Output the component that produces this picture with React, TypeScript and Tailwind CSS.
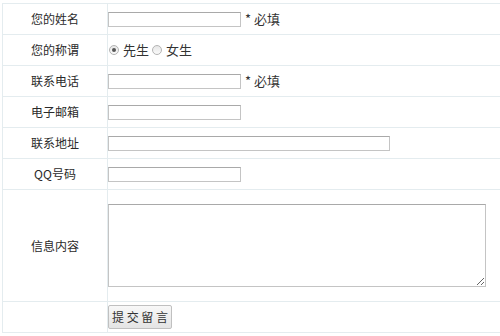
import type { ReactNode } from "react";

const line = "border-[#e4ecef]";
const font = { fontFamily: '"Noto Sans CJK SC", "Noto Sans", sans-serif' };

function Row({ label, h = "h-[31px]", children }: { label: string; h?: string; children?: ReactNode }) {
  return (
    <div className={`flex ${h} border-b ${line}`}>
      <div className={`flex w-[105px] shrink-0 items-center justify-center border-r ${line} text-[12px] text-[#2a2a2a]`}>
        {label}
      </div>
      <div className="flex flex-1 items-center">{children}</div>
    </div>
  );
}

function TextInput({ w = "w-[133px]" }: { w?: string }) {
  return (
    <input
      type="text"
      className={`${w} h-[15px] border border-[#c4c4c4] border-t-[#a9a9a9] bg-white outline-none`}
    />
  );
}

function Radio({ checked }: { checked?: boolean }) {
  return (
    <span className="inline-flex h-[10px] w-[10px] items-center justify-center rounded-full border border-[#b4b4b4] bg-gradient-to-b from-[#e6e6e6] to-[#fafafa]">
      {checked && <span className="h-[4px] w-[4px] rounded-full bg-[#555]" />}
    </span>
  );
}

const Required = () => (
  <span className="ml-[4px] text-[13px] text-[#333]">* 必填</span>
);

export default function App() {
  return (
    <div className="min-h-[336px] bg-white pl-[2px] pt-[3px]" style={font}>
      <div className={`border-l border-t ${line}`}>
        <Row label="您的姓名">
          <TextInput />
          <Required />
        </Row>
        <Row label="您的称谓">
          <div className="flex items-center text-[13px] text-[#333]">
            <span className="ml-[1px] mr-[4px] flex">
              <Radio checked />
            </span>
            <span>先生</span>
            <span className="ml-[3px] mr-[4px] flex">
              <Radio />
            </span>
            <span>女生</span>
          </div>
        </Row>
        <Row label="联系电话">
          <TextInput />
          <Required />
        </Row>
        <Row label="电子邮箱">
          <TextInput />
        </Row>
        <Row label="联系地址">
          <TextInput w="w-[282px]" />
        </Row>
        <Row label="QQ号码">
          <TextInput />
        </Row>
        <Row label="信息内容" h="h-[112px]">
          <textarea className="h-[83px] w-[378px] border border-[#c4c4c4] border-t-[#a9a9a9] bg-white outline-none" />
        </Row>
        <Row label="">
          <button className="flex h-[24px] w-[64px] items-center justify-center whitespace-nowrap rounded-[2px] border border-[#c0c0c0] bg-gradient-to-b from-[#f8f8f8] to-[#e4e4e4] p-0 text-[12px] text-[#333]">
            提 交 留 言
          </button>
        </Row>
      </div>
    </div>
  );
}
